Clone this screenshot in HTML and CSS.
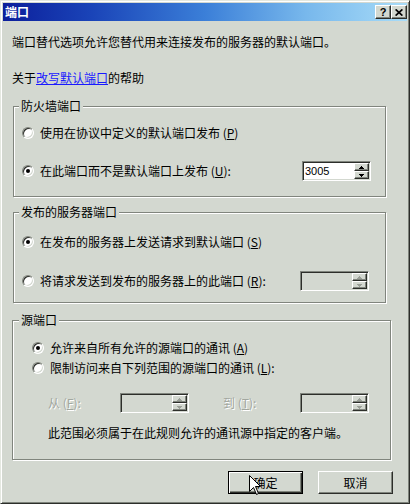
FILE: index.html
```html
<!DOCTYPE html>
<html lang="zh-CN">
<head>
<meta charset="utf-8">
<title>端口</title>
<link rel="stylesheet" href="styles.css">
</head>
<body>
<div class="window">
  <div class="titlebar">
    <span class="title">端口</span>
    <div class="tb-buttons">
      <span class="tb-btn tb-help">?</span>
      <span class="tb-btn tb-close"><svg width="8" height="7" viewBox="0 0 8 7"><path d="M0.6 0.4L7.4 6.6M7.4 0.4L0.6 6.6" stroke="#000" stroke-width="1.7"/></svg></span>
    </div>
  </div>
  <div class="content">
    <p class="intro">端口替代选项允许您替代用来连接发布的服务器的默认端口。</p>
    <p class="help">关于<a class="link" href="#">改写默认端口</a>的帮助</p>

    <div class="group group-fw">
      <div class="legend">防火墙端口</div>
      <div class="group-body body-fw">
        <div class="row"><span class="radio"></span><span class="label">使用在协议中定义的默认端口发布 (<u>P</u>)</span></div>
        <div class="row row-spin gap-fw"><span class="radio checked"></span><span class="label">在此端口而不是默认端口上发布 (<u>U</u>):</span>
          <div class="spin spin-right">
            <span class="spin-value">3005</span>
            <span class="spin-btns">
              <span class="spin-btn"><svg width="5" height="3" viewBox="0 0 5 3"><path d="M2 0h1v1h1v1h1v1H0V2h1V1h1z"/></svg></span>
              <span class="spin-btn"><svg width="5" height="3" viewBox="0 0 5 3"><path d="M0 0h5v1H4v1H3v1H2V2H1V1H0z"/></svg></span>
            </span>
          </div>
        </div>
      </div>
    </div>

    <div class="group group-srv">
      <div class="legend">发布的服务器端口</div>
      <div class="group-body body-srv">
        <div class="row"><span class="radio checked"></span><span class="label">在发布的服务器上发送请求到默认端口 (<u>S</u>)</span></div>
        <div class="row row-spin gap-srv"><span class="radio"></span><span class="label">将请求发送到发布的服务器上的此端口 (<u>R</u>):</span>
          <div class="spin spin-right spin-srv disabled">
            <span class="spin-value"></span>
            <span class="spin-btns">
              <span class="spin-btn"><svg width="5" height="3" viewBox="0 0 5 3"><path d="M2 0h1v1h1v1h1v1H0V2h1V1h1z"/></svg></span>
              <span class="spin-btn"><svg width="5" height="3" viewBox="0 0 5 3"><path d="M0 0h5v1H4v1H3v1H2V2H1V1H0z"/></svg></span>
            </span>
          </div>
        </div>
      </div>
    </div>

    <div class="group group-src">
      <div class="legend">源端口</div>
      <div class="group-body body-src">
        <div class="row row-indent"><span class="radio checked"></span><span class="label">允许来自所有允许的源端口的通讯 (<u>A</u>)</span></div>
        <div class="row row-indent gap-src"><span class="radio"></span><span class="label">限制访问来自下列范围的源端口的通讯 (<u>L</u>):</span></div>
        <div class="row row-range">
          <span class="label disabled-text range-from">从 (<u>F</u>):</span>
          <div class="spin disabled">
            <span class="spin-value"></span>
            <span class="spin-btns">
              <span class="spin-btn"><svg width="5" height="3" viewBox="0 0 5 3"><path d="M2 0h1v1h1v1h1v1H0V2h1V1h1z"/></svg></span>
              <span class="spin-btn"><svg width="5" height="3" viewBox="0 0 5 3"><path d="M0 0h5v1H4v1H3v1H2V2H1V1H0z"/></svg></span>
            </span>
          </div>
          <span class="label disabled-text range-to">到 (<u>T</u>):</span>
          <div class="spin disabled">
            <span class="spin-value"></span>
            <span class="spin-btns">
              <span class="spin-btn"><svg width="5" height="3" viewBox="0 0 5 3"><path d="M2 0h1v1h1v1h1v1H0V2h1V1h1z"/></svg></span>
              <span class="spin-btn"><svg width="5" height="3" viewBox="0 0 5 3"><path d="M0 0h5v1H4v1H3v1H2V2H1V1H0z"/></svg></span>
            </span>
          </div>
        </div>
        <p class="note">此范围必须属于在此规则允许的通讯源中指定的客户端。</p>
      </div>
    </div>

    <div class="buttons">
      <button class="btn btn-default" type="button">确定</button>
      <button class="btn" type="button">取消</button>
    </div>
  </div>
  <svg class="cursor" width="13" height="21" viewBox="0 0 13 21"><path d="M0.5 0.5V16.5L4.5 12.5L7.5 19.5L9.5 18.5L6.5 11.5H11.5Z" fill="#fff" stroke="#000" stroke-width="1" stroke-linejoin="miter"/></svg>
</div>
</body>
</html>
```

FILE: styles.css
```css
html, body {
  margin: 0;
  padding: 0;
}

body {
  width: 410px;
  height: 504px;
  overflow: hidden;
  background: #d3d8d0;
  font-family: "Noto Sans CJK SC", "Liberation Sans", sans-serif;
  font-size: 12px;
  color: #000;
}

.window {
  position: relative;
  box-sizing: border-box;
  width: 410px;
  height: 504px;
  padding: 2px;
  background: #d3d8d0;
  border: 1px solid;
  border-color: #e4e8e0 #2c2e2a #2c2e2a #e4e8e0;
  box-shadow: inset 1px 1px 0 #fff, inset -1px -1px 0 #7e837b;
}

.titlebar {
  height: 18px;
  display: flex;
  align-items: center;
  justify-content: space-between;
  padding: 0 0 0 2px;
  background: linear-gradient(90deg, #0c1f9b 0%, #1a44b8 22%, #3b7fd8 50%, #78b8ec 75%, #a8dcf8 100%);
}

.title {
  color: #fff;
  font-weight: 700;
  font-size: 12px;
  line-height: 14px;
}

.tb-buttons {
  display: flex;
}

.tb-btn {
  box-sizing: border-box;
  width: 16px;
  height: 14px;
  display: flex;
  align-items: center;
  justify-content: center;
  background: #d3d8d0;
  border: 1px solid;
  border-color: #fff #2c2e2a #2c2e2a #fff;
  box-shadow: inset -1px -1px 0 #7e837b;
  font-family: "Liberation Sans", sans-serif;
  font-weight: 700;
  font-size: 11px;
  line-height: 11px;
}

.content {
  padding: 13px 14px 0 9px;
}

.intro, .help, .note {
  margin: 0;
  line-height: 16px;
}

.help {
  margin-top: 20px;
}

.link {
  color: #1a1aff;
  text-decoration: underline;
}

.group {
  box-sizing: border-box;
  border: 1px solid #80857d;
  box-shadow: inset 1px 1px 0 #fff, 1px 1px 0 #fff;
  padding: 0 14px 0 5px;
}

.group-fw {
  width: 373px;
  margin: 20px 0 0 1px;
}

.group-srv {
  width: 373px;
  margin: 15px 0 0 1px;
}

.group-src {
  width: 379px;
  margin: 17px 0 0 0;
  padding-left: 6px;
}

.legend {
  width: fit-content;
  margin-top: -8px;
  padding: 0 2px;
  line-height: 14px;
  background: #d3d8d0;
}

.body-fw {
  padding: 12px 0 15px 0;
}

.body-srv {
  padding: 15px 0 11px 0;
}

.body-src {
  padding: 13px 0 18px 0;
}

.row {
  display: flex;
  align-items: center;
  height: 16px;
  padding-left: 3px;
}

.row-spin {
  height: 20px;
}

.gap-fw {
  margin-top: 20px;
}

.gap-srv {
  margin-top: 21px;
}

.row-indent {
  padding-left: 13px;
}

.gap-src {
  margin-top: 4px;
}

.row-range {
  height: 20px;
  margin-top: 17px;
  padding-left: 29px;
}

.range-from {
  width: 72px;
  margin-left: 0;
}

.range-to {
  width: 77px;
  margin-left: 34px;
}

.label {
  white-space: nowrap;
  line-height: 16px;
}

.radio {
  box-sizing: border-box;
  flex: none;
  width: 12px;
  height: 12px;
  margin-right: 6px;
  border-radius: 50%;
  border: 1px solid;
  border-color: #80857d #fff #fff #80857d;
  background: #fff;
  box-shadow: inset 1px 1px 0 #2c2e2a, inset -1px -1px 0 #d3d8d0;
  display: flex;
  align-items: center;
  justify-content: center;
}

.radio.checked::after {
  content: "";
  width: 4px;
  height: 4px;
  border-radius: 50%;
  background: #000;
}

.spin {
  box-sizing: border-box;
  flex: none;
  width: 69px;
  height: 20px;
  display: flex;
  background: #fff;
  border: 1px solid;
  border-color: #80857d #fff #fff #80857d;
  box-shadow: inset 1px 1px 0 #2c2e2a, inset -1px -1px 0 #d3d8d0;
  padding: 1px;
}

.spin-right {
  margin-left: auto;
}

.spin-srv {
  margin-right: 2px;
}

.spin-value {
  flex: 1;
  font-family: "Liberation Sans", sans-serif;
  font-size: 11px;
  line-height: 16px;
  padding-left: 1px;
}

.spin-btns {
  display: flex;
  flex-direction: column;
  width: 15px;
}

.spin-btn {
  box-sizing: border-box;
  flex: 1;
  display: flex;
  align-items: center;
  justify-content: center;
  background: #d3d8d0;
  border: 1px solid;
  border-color: #fff #2c2e2a #2c2e2a #fff;
  box-shadow: inset -1px -1px 0 #80857d;
  color: #000;
}

.spin-btn svg {
  fill: currentColor;
  display: block;
}

.spin.disabled {
  background: #d3d8d0;
}

.spin.disabled .spin-btn {
  color: #9a9f97;
}

.disabled-text {
  color: #a2a79f;
  text-shadow: 1px 1px 0 #fff;
}

.note {
  margin-top: 12px;
  padding-left: 29px;
}

.buttons {
  display: flex;
  justify-content: flex-end;
  gap: 15px;
  margin-top: 11px;
}

.btn {
  box-sizing: border-box;
  width: 75px;
  height: 23px;
  padding: 0;
  background: #d3d8d0;
  border: 1px solid;
  border-color: #fff #2c2e2a #2c2e2a #fff;
  box-shadow: inset -1px -1px 0 #80857d;
  font-family: "Noto Sans CJK SC", "Liberation Sans", sans-serif;
  font-size: 12px;
  color: #000;
}

.btn-default {
  border: 1px solid #000;
  box-shadow: inset 1px 1px 0 #fff, inset -1px -1px 0 #2c2e2a, inset -2px -2px 0 #80857d;
}

.cursor {
  position: absolute;
  left: 248px;
  top: 474px;
}
```
